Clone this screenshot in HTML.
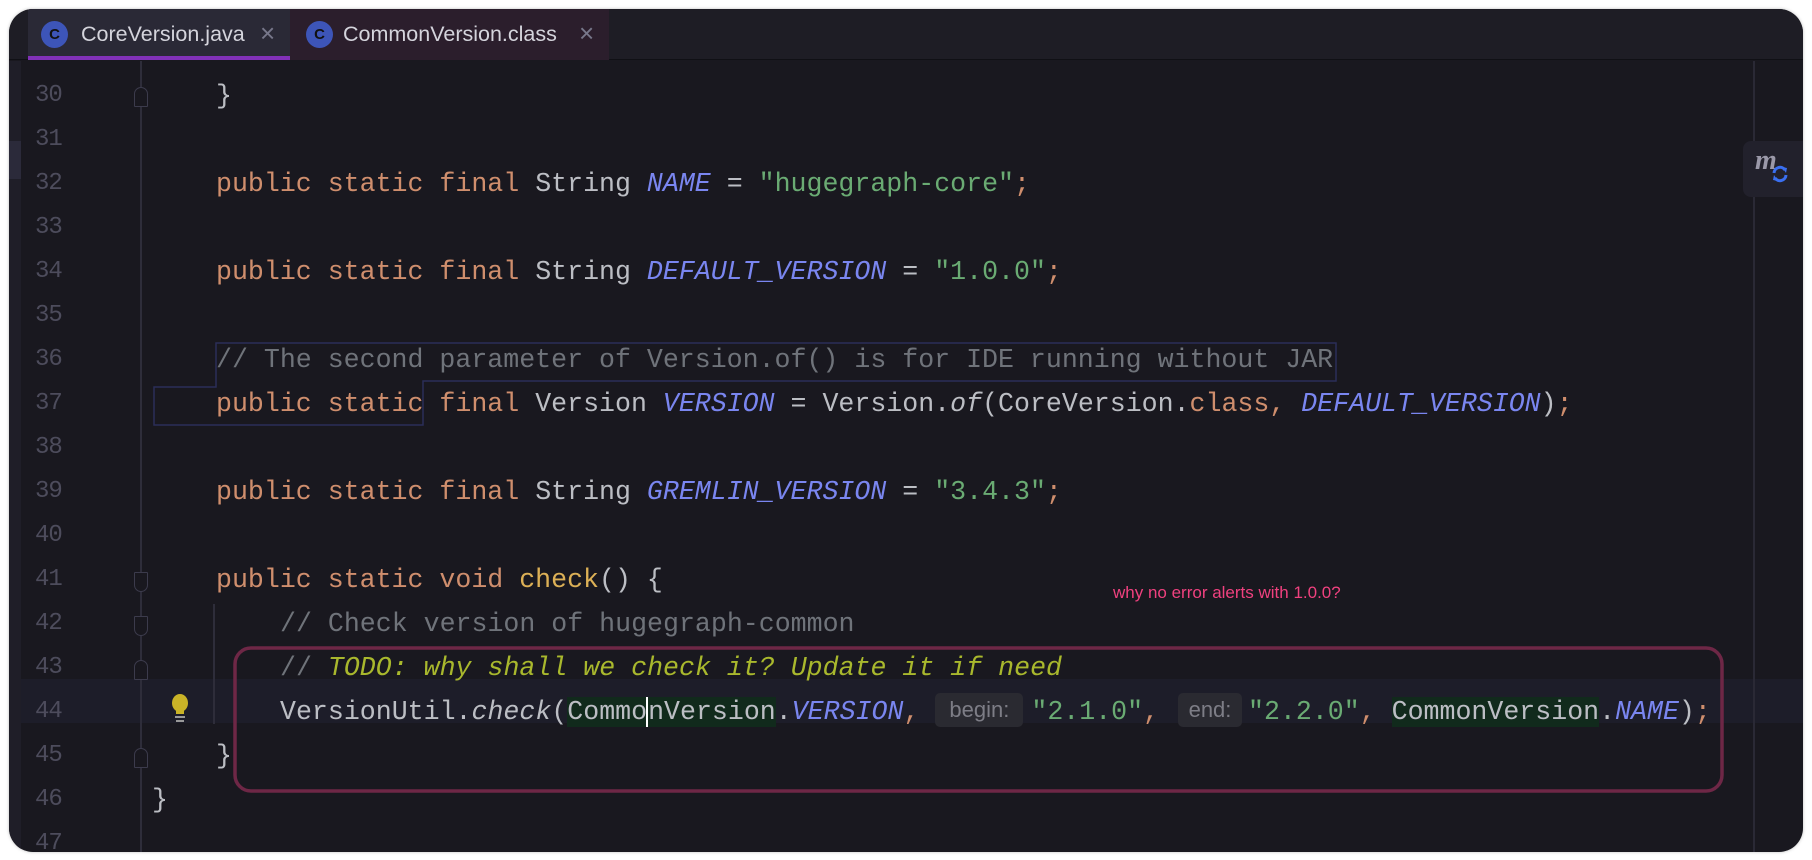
<!DOCTYPE html>
<html><head><meta charset="utf-8"><style>
*{margin:0;padding:0;box-sizing:border-box}
body{width:1812px;height:860px;background:#fff;position:relative;overflow:hidden;font-family:"Liberation Mono",monospace}
#win{position:absolute;left:9px;top:9px;width:1794px;height:843px;border-radius:24px;background:#19181f;overflow:hidden;box-shadow:0 0 3px rgba(0,0,0,.25)}
#tabs{position:absolute;left:0;top:0;width:100%;height:51px;background:#1e1d25;border-bottom:1px solid #101015}
.tab{position:absolute;top:0;height:51px;font-family:"Liberation Sans",sans-serif;font-size:21.5px;color:#d4d4dc;line-height:51px}
.ic{position:absolute;top:12px;width:27px;height:27px;border-radius:50%;background:#3d55b8;color:#111;font-size:15px;line-height:27px;text-align:center;font-weight:bold}
.x{color:#77778a;font-size:26px;position:absolute;top:-1px}
.ln{position:absolute;left:26px;width:60px;height:44px;line-height:44px;font-size:24px;color:#4d4c5c;letter-spacing:-1px}
.cl{position:absolute;height:44px;line-height:44px;font-size:26.6px;color:#bcbec4;white-space:pre}
.k{color:#cf8e6d}.s{color:#6aab73}.c{font-style:italic;color:#7a86f0}.cm{color:#6f737a}.t{color:#a9b82d;font-style:italic}.m{color:#dcb056}.i{font-style:italic}
.hl{background:#112a1c}
.hint{display:inline-block;font-family:"Liberation Sans",sans-serif;font-size:22px;color:#7d7d86;background:#2a2a31;border-radius:5px;line-height:34px;text-align:center;vertical-align:2px}
.fold{position:absolute;left:125px;width:14px;height:20px;border:1.5px solid #3c3b4c;background:#19181f}
</style></head><body>
<div id="win">
 <div style="position:absolute;left:0;top:52px;width:12px;height:800px;background:#1f1e28"></div>
 <div style="position:absolute;left:0;top:132px;width:12px;height:38px;background:#2b2a3a"></div>
 <div style="position:absolute;left:12px;top:670px;width:1794px;height:44px;background:#1d1d29"></div>
 <div style="position:absolute;left:131px;top:52px;width:1.5px;height:800px;background:#2e2d3a"></div>
 <div style="position:absolute;left:204px;top:595px;width:1.5px;height:120px;background:#2e2d3a"></div>
 <div style="position:absolute;left:1744px;top:52px;width:1.5px;height:800px;background:#2a2935"></div>

 <div id="tabs">
  <div class="tab" style="left:19px;width:262px;background:#2a2936">
   <div class="ic" style="left:13px">C</div><span style="position:absolute;left:53px">CoreVersion.java</span><span class="x" style="left:232px">×</span>
   <div style="position:absolute;left:0;bottom:0;width:100%;height:4px;background:#8131b8"></div></div>
  <div class="tab" style="left:281px;width:319px;background:#2b1e2c">
   <div class="ic" style="left:16px">C</div><span style="position:absolute;left:53px">CommonVersion.class</span><span class="x" style="left:289px">×</span></div>
 </div>

 <svg style="position:absolute;left:0;top:0" width="1794" height="843">
  <path d="M207,334 H1327 V372 H414 V416 H145 V378 H207 Z" fill="none" stroke="#2b2d58" stroke-width="1.5"/>
  <rect x="226" y="639" width="1487" height="143" rx="16" fill="none" stroke="#6e2746" stroke-width="3.5"/>
 </svg>

 <div class="ln" style="top:65px">30</div><div class="ln" style="top:109px">31</div><div class="ln" style="top:153px">32</div><div class="ln" style="top:197px">33</div><div class="ln" style="top:241px">34</div><div class="ln" style="top:285px">35</div><div class="ln" style="top:329px">36</div><div class="ln" style="top:373px">37</div><div class="ln" style="top:417px">38</div><div class="ln" style="top:461px">39</div><div class="ln" style="top:505px">40</div><div class="ln" style="top:549px">41</div><div class="ln" style="top:593px">42</div><div class="ln" style="top:637px">43</div><div class="ln" style="top:681px">44</div><div class="ln" style="top:725px">45</div><div class="ln" style="top:769px">46</div><div class="ln" style="top:813px">47</div>

 <div class="fold" style="top:78px;border-radius:7px 7px 1px 1px"></div>
 <div class="fold" style="top:563px;border-radius:1px 1px 7px 7px"></div>
 <div class="fold" style="top:607px;border-radius:1px 1px 7px 7px"></div>
 <div class="fold" style="top:651px;border-radius:7px 7px 1px 1px"></div>
 <div class="fold" style="top:739px;border-radius:7px 7px 1px 1px"></div>

 <svg style="position:absolute;left:160px;top:684px" width="22" height="32"><ellipse cx="11" cy="10" rx="8" ry="9" fill="#c9b327"/><rect x="7" y="17" width="8" height="4" fill="#c9b327"/><rect x="6" y="23" width="10" height="2" fill="#999"/><rect x="7" y="27" width="8" height="2" fill="#999"/></svg>

 <div class="cl" style="left:207px;top:65px">}</div>
 <div class="cl" style="left:207px;top:153px"><span class="k">public static final </span>String <span class="c">NAME</span> = <span class="s">"hugegraph-core"</span><span class="k">;</span></div>
 <div class="cl" style="left:207px;top:241px"><span class="k">public static final </span>String <span class="c">DEFAULT_VERSION</span> = <span class="s">"1.0.0"</span><span class="k">;</span></div>
 <div class="cl" style="left:207px;top:329px"><span class="cm">// The second parameter of Version.of() is for IDE running without JAR</span></div>
 <div class="cl" style="left:207px;top:373px"><span class="k">public static final </span>Version <span class="c">VERSION</span> = Version.<span class="i">of</span>(CoreVersion.<span class="k">class, </span><span class="c">DEFAULT_VERSION</span>)<span class="k">;</span></div>
 <div class="cl" style="left:207px;top:461px"><span class="k">public static final </span>String <span class="c">GREMLIN_VERSION</span> = <span class="s">"3.4.3"</span><span class="k">;</span></div>
 <div class="cl" style="left:207px;top:549px"><span class="k">public static void </span><span class="m">check</span>() {</div>
 <div class="cl" style="left:271px;top:593px"><span class="cm">// Check version of hugegraph-common</span></div>
 <div class="cl" style="left:271px;top:637px"><span class="cm">// </span><span class="t">TODO: why shall we check it? Update it if need</span></div>
 <div class="cl" style="left:271px;top:681px">VersionUtil.<span class="i">check</span>(<span class="hl">Commo<span style="border-left:2px solid #fff;margin-left:-1px"></span>nVersion</span>.<span class="c">VERSION</span><span class="k">, </span><span class="hint" style="width:88px;margin-right:8px">begin:</span><span class="s">"2.1.0"</span><span class="k">, </span><span class="hint" style="width:64px;margin-left:3px;margin-right:6px">end:</span><span class="s">"2.2.0"</span><span class="k">, </span><span class="hl">CommonVersion</span>.<span class="c">NAME</span>)<span class="k">;</span></div>
 <div class="cl" style="left:207px;top:725px">}</div>
 <div class="cl" style="left:143px;top:769px">}</div>

 <div style="position:absolute;left:1104px;top:574px;font-family:'Liberation Sans',sans-serif;font-size:17px;color:#f0417f">why no error alerts with 1.0.0?</div>

 <div style="position:absolute;left:1734px;top:132px;width:60px;height:56px;background:#22212c;border-radius:8px 0 0 8px">
  <span style="position:absolute;left:12px;top:4px;font-family:'Liberation Serif',serif;font-style:italic;font-weight:bold;font-size:28px;color:#9a98a8">m</span>
  <svg style="position:absolute;left:28px;top:24px" width="18" height="18" viewBox="0 0 18 18"><path d="M3,8 A6,6 0 0 1 14,5 M15,10 A6,6 0 0 1 4,13" fill="none" stroke="#3a6ff0" stroke-width="3"/><path d="M11,2 L16,3 L15,8Z M7,16 L2,15 L3,10Z" fill="#3a6ff0"/></svg>
 </div>
</div>
</body></html>
